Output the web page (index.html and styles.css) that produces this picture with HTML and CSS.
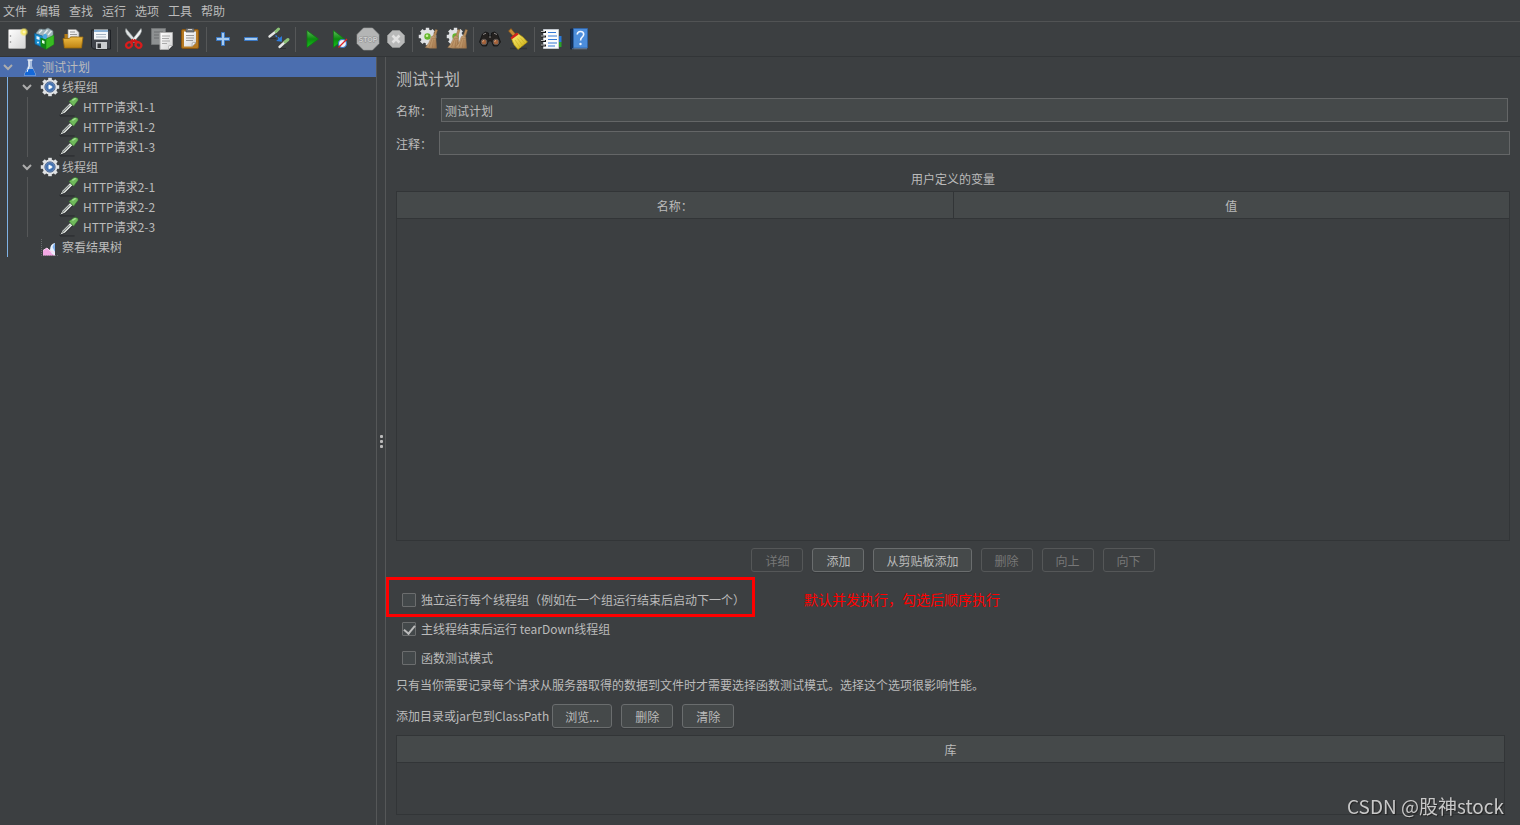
FILE: index.html
```html
<!DOCTYPE html>
<html lang="zh-CN">
<head>
<meta charset="utf-8">
<title>测试计划</title>
<link rel="stylesheet" href="styles.css">
</head>
<body>
<svg class="defs" aria-hidden="true">
  <defs>
    <linearGradient id="paper" x1="0" y1="0" x2="1" y2="1"><stop offset="0" stop-color="#fff"/><stop offset="1" stop-color="#d4d4d4"/></linearGradient>
    <linearGradient id="gold" x1="0" y1="0" x2="0" y2="1"><stop offset="0" stop-color="#eebd45"/><stop offset="1" stop-color="#bf8312"/></linearGradient>
    <linearGradient id="green" x1="0" y1="0" x2="0" y2="1"><stop offset="0" stop-color="#5fc05a"/><stop offset=".5" stop-color="#0c8a10"/><stop offset="1" stop-color="#16c51b"/></linearGradient>
    <linearGradient id="straw" x1="0" y1="0" x2="1" y2="1"><stop offset="0" stop-color="#d8b98e"/><stop offset="1" stop-color="#a67a4e"/></linearGradient>
    <linearGradient id="yellow" x1="0" y1="0" x2="1" y2="1"><stop offset="0" stop-color="#fff27a"/><stop offset="1" stop-color="#c9a90c"/></linearGradient>
    <radialGradient id="glow"><stop offset="0" stop-color="#fffde0"/><stop offset=".45" stop-color="#f6e65c"/><stop offset="1" stop-color="#f6e65c" stop-opacity="0"/></radialGradient>
    <radialGradient id="ball"><stop offset="0" stop-color="#bce3ff"/><stop offset=".6" stop-color="#3565a8"/><stop offset="1" stop-color="#7e9cc6"/></radialGradient>
  </defs>
  <symbol id="pipette" viewBox="1 1 18 18">
    <path d="M2 18h13" stroke="#2b2d2f" stroke-width="1.500" opacity=".7"/>
    <path d="M1.500 17.500 4 13l7-7 2.500 2.500-7 7z" fill="#dfe2df" stroke="#24272a" stroke-width=".8"/>
    <path d="M4 15 10.500 8.500" stroke="#7b827f" stroke-width="1"/>
    <path d="m10 5 1.500-1.200L14.500 1.500Q18.500 .8 18.200 4L15.500 7.500l-1.300 1.800z" fill="#6fb95b" stroke="#2f6d29" stroke-width=".5"/>
    <path d="m13 4 3-1.800" stroke="#a6dd94" stroke-width="1.200"/>
  </symbol>
  <symbol id="gear" viewBox="0 0 20 20">
    <g fill="#e0e2e4"><circle cx="10" cy="10" r="7.400"/><path d="M8.200.8h3.600v18.400H8.200z"/><path d="M.8 8.200h18.400v3.600H.8z"/><path d="m2.200 4.800 2.600-2.600 13 13-2.600 2.600z"/><path d="m15.200 2.200 2.600 2.600-13 13-2.600-2.600z"/></g>
  </symbol>
  <symbol id="straws" viewBox="0 0 14 20">
    <path d="m11 .5 2 .6-2.200 7-2.200-.8z" fill="#b98e5c" stroke="#8a6439" stroke-width=".4"/>
    <path d="M7 7.500q2-1.500 4.300.5l.7 11.200H5.500L.8 18.500q4-4 6.200-11z" fill="url(#straw)" stroke="#94704a" stroke-width=".5"/>
    <path d="M7.500 10 4.500 18m4.500-7.500-1 8m2.500-7.800.2 8M7 9.300h4.300" stroke="#96683e" stroke-width=".5" fill="none"/>
  </symbol>
</svg>

<header>
  <nav class="menubar" aria-label="菜单">
    <button>文件</button><button>编辑</button><button>查找</button><button>运行</button><button>选项</button><button>工具</button><button>帮助</button>
  </nav>
  <div class="toolbar" role="toolbar" aria-label="工具栏">
    <button aria-label="新建"><svg viewBox="0 0 24 24"><rect x="3.500" y="2.500" width="17" height="19" rx="1" fill="url(#paper)" stroke="#a7a7a7"/><circle cx="5.500" cy="9" r=".8" fill="#888"/><circle cx="5.500" cy="15" r=".8" fill="#888"/><circle cx="19" cy="5" r="4.500" fill="url(#glow)"/></svg></button>
    <button aria-label="模板"><svg viewBox="0 0 24 24"><path d="M3 6 6.500 2l5.500.5L15 1l5 3v7H4z" fill="#9fb4bb" stroke="#70858c" stroke-width=".6"/><path d="M6 6 9 3m2 4 3.500-4M15 8l3.500-4" stroke="#e6eef0" stroke-width="1.400"/><path d="M1.500 6.500 9.500 9v11.500L2 17z" fill="#168cd0" stroke="#0d578a" stroke-width=".7"/><path d="M9.500 9 12 6.500 14 8v6l-4.500 2z" fill="#4aaade"/><path d="m3.500 9 3 1v3l-3-1z" fill="#e8f6fd"/><circle cx="5" cy="15.500" r="1" fill="#d5effc"/><path d="m7.500 10.500 5.500 2v10l-5.500-3z" fill="#0f8314"/><path d="m13 12 8-4v9.500l-8 5z" fill="#38bb22" stroke="#137a12" stroke-width=".5"/><path d="m9 13 2.500 1v3L9 16z" fill="#e2ffe0"/></svg></button>
    <button aria-label="打开"><svg viewBox="0 0 24 24"><path d="M3.500 21V7h5l2 3h10v11z" fill="#b37a12"/><path d="M7 14V2.500h8l3 3V14z" fill="url(#paper)" stroke="#8d8d8d" stroke-width=".7"/><path d="M9 5h5M9 7.500h7M9 10h7" stroke="#999"/><path d="M2 11.500h6l2-1.500h12l-1.500 11h-17z" fill="url(#gold)" stroke="#9a690c" stroke-width=".8"/></svg></button>
    <button aria-label="保存"><svg viewBox="0 0 24 24"><path d="M2.500 3h19v19H4.500l-2-2z" fill="#40444b" stroke="#1f2226"/><rect x="5" y="2.500" width="14" height="10" fill="#f4f7fa"/><path d="M5 3h14v2H5z" fill="#8ab1d5"/><path d="M7 7.500h10M7 10h10" stroke="#a5b3c1"/><path d="M7 15h11v7H7z" fill="#c9ccd0"/><path d="M8.500 16.500h3.500V21H8.500z" fill="#33363a"/></svg></button>
    <span class="sep"></span>
    <button aria-label="剪切"><svg viewBox="0 0 24 24"><path d="M4 1.500Q2.500 4 5 7.500l7.500 8 1.500-2z" fill="#dfe3e4" stroke="#8d9495" stroke-width=".6"/><path d="M19 1.500Q20.500 4 18 7.500l-6.500 8-2-2z" fill="#f1f3f3" stroke="#8d9495" stroke-width=".6"/><path d="m11.500 13-3 2.500m3-2.500 4 2.500" stroke="#c91818" stroke-width="3"/><ellipse cx="7" cy="18" rx="3" ry="2.600" fill="none" stroke="#d91c1c" stroke-width="2.200" transform="rotate(-40 7 18)"/><ellipse cx="16.500" cy="18" rx="3" ry="2.600" fill="none" stroke="#d91c1c" stroke-width="2.200" transform="rotate(40 16.500 18)"/></svg></button>
    <button aria-label="复制"><svg viewBox="0 0 24 24"><path d="M1.500 1.500h14v16h-14z" fill="#8e9192" stroke="#717475"/><path d="M4 5h9M4 8h5M4 11h5" stroke="#6c6f70"/><path d="M10 5.500h12.500v13l-4 4H10z" fill="url(#paper)" stroke="#aaa"/><path d="M12 9h8m-8 2.500h7M12 14h8m-8 2.500h5" stroke="#aaa"/><path d="m18.500 22.500.3-3.700 3.700-.3z" fill="#fff" stroke="#999" stroke-width=".6"/></svg></button>
    <button aria-label="粘贴"><svg viewBox="0 0 24 24"><rect x="3.500" y="2.500" width="17" height="19" rx="1.500" fill="#b77a22" stroke="#885510"/><path d="M6 4.500h12v11l-4 4H6z" fill="url(#paper)"/><path d="M8 1.500h8V5H8z" fill="#777b7e" stroke="#4c4f51" stroke-width=".7"/><path d="M10 2.500h4" stroke="#ccc"/><path d="M8 8.500h8M8 11h8m-8 2.500h7" stroke="#999"/><path d="m14 19.500.3-3.700 3.700-.3z" fill="#fff" stroke="#888" stroke-width=".6"/></svg></button>
    <span class="sep"></span>
    <button aria-label="展开"><svg viewBox="0 0 24 24"><path d="M10.500 5.500h3v5h5v3h-5v5h-3v-5h-5v-3h5z" fill="#a7cbef" stroke="#3a78c4"/></svg></button>
    <button aria-label="折叠"><svg viewBox="0 0 24 24"><path d="M5.500 10.500h13v3h-13z" fill="#a7cbef" stroke="#3a78c4"/></svg></button>
    <button aria-label="切换"><svg viewBox="0 0 24 24"><path d="m2.500 9.500 7-5.500" stroke="#e4e6e4" stroke-width="2.400" stroke-linecap="round"/><path d="m9 4.500 2.500-2.500" stroke="#8cc277" stroke-width="3" stroke-linecap="round"/><path d="m12.500 20 5.500-5" stroke="#e4e6e4" stroke-width="2.400" stroke-linecap="round"/><path d="m18 15 3-2.500" stroke="#8cc277" stroke-width="3" stroke-linecap="round"/><path d="m8.500 8.500 5 4" stroke="#2f7de0" stroke-width="1.400" stroke-dasharray="2 1"/><path d="m15 9-.2 5.700-5.700-.7z" fill="#2f7de0"/><path d="M3 11.500h6M13 21.500h6" stroke="#27292b" opacity=".7"/></svg></button>
    <span class="sep"></span>
    <button aria-label="启动"><svg viewBox="0 0 24 24"><path d="M7 3.500 18.500 12 7 20.500z" fill="url(#green)" stroke="#0b7a10" stroke-width=".7"/></svg></button>
    <button aria-label="不停顿开始"><svg viewBox="0 0 24 24"><path d="M5.500 3.500 16.500 12l-11 8.500z" fill="url(#green)" stroke="#0b7a10" stroke-width=".7"/><circle cx="14.500" cy="16.500" r="4" fill="#edf3fb" stroke="#3c77c4" stroke-width="1.200"/><path d="m10.500 20.500 8.500-8.500" stroke="#e02222" stroke-width="1.300"/></svg></button>
    <button aria-label="停止" disabled><svg viewBox="0 0 24 24"><path d="M7.500 1h9L23 7.500v9L16.500 23h-9L1 16.500v-9z" fill="#b4b5b5" stroke="#9c9d9e" stroke-width=".6"/><text class="stop-word" x="12" y="15" text-anchor="middle">STOP</text></svg></button>
    <button aria-label="关闭" disabled><svg viewBox="0 0 24 24"><path d="M8.500 3.500h7l5 5v7l-5 5h-7l-5-5v-7z" fill="#b8b9b9" stroke="#9c9d9e" stroke-width=".6"/><path d="m8.500 8.500 7 7m0-7-7 7" stroke="#e2e2e2" stroke-width="2.600"/></svg></button>
    <span class="sep"></span>
    <button aria-label="清除"><svg viewBox="0 0 24 24"><use href="#gear" x="1" y="0" width="19" height="19"/><circle cx="10.500" cy="9.500" r="3.200" fill="#63b52e"/><circle cx="10" cy="8.700" r="1.300" fill="#c9f29a"/><use href="#straws" x="7.500" y="2" width="14" height="20"/></svg></button>
    <button aria-label="清除全部"><svg viewBox="0 0 24 24"><use href="#gear" x="1" y="0" width="19" height="19"/><circle cx="10.500" cy="9.500" r="3.200" fill="#63b52e"/><use href="#straws" x="2" y="2" width="14" height="20"/><use href="#straws" x="9.500" y="2" width="14" height="20"/></svg></button>
    <span class="sep"></span>
    <button aria-label="查找"><svg viewBox="0 0 24 24"><path d="m4.500 7 3-2 3 1v3h3V6l3-1 3 2 3 8-3 4h-4l-2-5h-3l-2 5h-4l-3-4z" fill="#24211f" stroke="#0f0e0e" stroke-width=".7"/><path d="m5 7.500 3-1.300m8 0 3 1.300M11 10h2" stroke="#8b8785"/><circle cx="6" cy="15" r="2.800" fill="#a5623a" stroke="#5c5856"/><circle cx="18" cy="15" r="2.800" fill="#a5623a" stroke="#5c5856"/><path d="m4.500 14.500 1.500-1m10.500 1 1.500-1" stroke="#e9b48a"/></svg></button>
    <button aria-label="重置查找"><svg viewBox="0 0 24 24"><path d="M4 21.500h17" stroke="#2b2d2f" stroke-width="1.500" opacity=".7"/><path d="m2.500 4 2.500-2.500L9.500 7 7 9z" fill="#c98a36" stroke="#80501a" stroke-width=".7"/><path d="m5.500 11.500 6.500-5q6 3.500 9.500 8.500L12 22.500Q7 18 5.500 11.500z" fill="url(#yellow)" stroke="#a48a0a" stroke-width=".7"/><path d="m9 13 5.500 8m-3-9.500L17 19m-3-8.500 5.500 6.500" stroke="#c4aa20" stroke-width=".6"/><path d="m4.500 10.500 6.500-5 1.500 2-7 5z" fill="#d3221d"/></svg></button>
    <span class="sep"></span>
    <button aria-label="函数助手"><svg viewBox="0 0 24 24"><path d="M19.500 9h3v6h-3z" fill="#2878d8"/><path d="M19.500 15h3v5h-3z" fill="#29a32a"/><path d="M4.500 2.500h15v19h-15z" fill="#fafbfc" stroke="#c3c8ce"/><path d="M9 5.500h8M9 9h9M9 12.500h9M9 16h9M9 19h7" stroke="#3379d6" stroke-width="1.200"/><path d="M2 5h5M2 9.500h5M2 14h5M2 18.500h5" stroke="#17191b" stroke-width="2"/><path d="M2 4.500h4M2 9h4M2 13.500h4M2 18h4" stroke="#ddd" stroke-width=".8"/></svg></button>
    <button aria-label="帮助"><svg viewBox="0 0 24 24"><path d="M3.500 2h3.500v20H3.500z" fill="#152f55" stroke="#0d1c33" stroke-width=".6"/><path d="M6.500 1.500h14v19.500h-14z" fill="#4c8ddb" stroke="#2d65a9" stroke-width=".8"/><path d="M5 21.800h15" stroke="#8ea6c4" stroke-width=".6"/><path d="M10.200 7.500q.3-3 3.300-3 3.200 0 3.200 2.800 0 1.800-1.800 3-1.300 1-1.300 3.200" fill="none" stroke="#f0f6ff" stroke-width="1.600"/><circle cx="13.500" cy="17" r="1.200" fill="#f0f6ff"/></svg></button>
  </div>
</header>

<main>
  <aside class="tree">
    <ul>
      <li>
        <div class="node selected"><svg class="chev" viewBox="0 0 10 10"><path d="m1 3 4 4 4-4"/></svg><svg class="ico root" viewBox="0 0 14 20"><path d="M5 3h4v6l4 8.500q0 1.500-1.500 1.500h-9Q1 19 1 17.500L5 9z" fill="#c9d8ee" opacity=".7"/><path d="M4 12h6l2.500 5.500q0 1-1 1h-9q-1 0-1-1z" fill="#1468d8"/><path d="M4.500 3h5" stroke="#fff" stroke-width="1.200"/><path d="m6 4 .2 5-2.200 6" stroke="#fff" fill="none"/></svg>测试计划</div>
        <ul class="level1">
          <li>
            <div class="node"><svg class="chev" viewBox="0 0 10 10"><path d="m1 3 4 4 4-4"/></svg><svg class="ico" viewBox="0 0 20 20"><use href="#gear"/><circle cx="10" cy="10" r="5.200" fill="url(#ball)" stroke="#47618c" stroke-width=".8"/><path d="m8.700 7.500 4 2.500-4 2.500z" fill="#fff"/></svg>线程组</div>
            <ul class="level2">
              <li class="node"><svg class="ico" viewBox="0 0 20 20"><use href="#pipette"/></svg>HTTP请求1-1</li>
              <li class="node"><svg class="ico" viewBox="0 0 20 20"><use href="#pipette"/></svg>HTTP请求1-2</li>
              <li class="node"><svg class="ico" viewBox="0 0 20 20"><use href="#pipette"/></svg>HTTP请求1-3</li>
            </ul>
          </li>
          <li>
            <div class="node"><svg class="chev" viewBox="0 0 10 10"><path d="m1 3 4 4 4-4"/></svg><svg class="ico" viewBox="0 0 20 20"><use href="#gear"/><circle cx="10" cy="10" r="5.200" fill="url(#ball)" stroke="#47618c" stroke-width=".8"/><path d="m8.700 7.500 4 2.500-4 2.500z" fill="#fff"/></svg>线程组</div>
            <ul class="level2">
              <li class="node"><svg class="ico" viewBox="0 0 20 20"><use href="#pipette"/></svg>HTTP请求2-1</li>
              <li class="node"><svg class="ico" viewBox="0 0 20 20"><use href="#pipette"/></svg>HTTP请求2-2</li>
              <li class="node"><svg class="ico" viewBox="0 0 20 20"><use href="#pipette"/></svg>HTTP请求2-3</li>
            </ul>
          </li>
          <li class="node leaf"><svg class="ico" viewBox="0 0 20 20"><path d="M1.500 2v16.500H18" fill="none" stroke="#66696b" stroke-dasharray="1 1"/><path d="M3 18.500v-5l4-2.500 3 2 5 1.500v4z" fill="#f3a8e4"/><path d="M10 13q0-6 5-7v12.500Q11 17 10 13z" fill="#e9f2fd"/><path d="M12.500 10q1-3 2.500-4v9z" fill="#7fb0ee"/><path d="M3 13.500 7 11l3 3 5 1.500" stroke="#fbd7f4" fill="none"/></svg>察看结果树</li>
        </ul>
      </li>
    </ul>
  </aside>
  <div class="splitter" role="separator"><i></i><i></i><i></i></div>

  <section class="panel">
    <h1>测试计划</h1>
    <div class="field name"><label for="name">名称：</label><input id="name" type="text" value="测试计划"></div>
    <div class="field"><label for="comment">注释：</label><input id="comment" type="text"></div>

    <h2>用户定义的变量</h2>
    <div class="grid vars">
      <table><thead><tr><th>名称：</th><th>值</th></tr></thead></table>
    </div>
    <div class="actions">
      <button class="btn" disabled>详细</button>
      <button class="btn">添加</button>
      <button class="btn">从剪贴板添加</button>
      <button class="btn" disabled>删除</button>
      <button class="btn" disabled>向上</button>
      <button class="btn" disabled>向下</button>
    </div>

    <div class="marked">
      <label class="check outlined"><input type="checkbox">独立运行每个线程组（例如在一个组运行结束后启动下一个）</label>
      <span class="remark">默认并发执行，勾选后顺序执行</span>
    </div>
    <div class="options">
      <label class="check"><input type="checkbox" checked>主线程结束后运行 tearDown线程组</label>
      <label class="check"><input type="checkbox">函数测试模式</label>
    </div>
    <p>只有当你需要记录每个请求从服务器取得的数据到文件时才需要选择函数测试模式。选择这个选项很影响性能。</p>

    <div class="classpath">
      <span>添加目录或jar包到ClassPath</span>
      <div class="buttons">
        <button class="btn">浏览...</button>
        <button class="btn">删除</button>
        <button class="btn">清除</button>
      </div>
    </div>
    <div class="grid libs">
      <table><thead><tr><th>库</th></tr></thead></table>
    </div>
  </section>
</main>
<div class="watermark">CSDN @股神stock</div>
</body>
</html>
```

FILE: styles.css
```css
:root {
  --bg: #3c3f41;
  --raised: #45494a;
  --line: #555758;
  --dark: #323537;
  --text: #bbbbbb;
}

* { box-sizing: border-box; }

body {
  margin: 0;
  min-height: 100vh;
  display: flex;
  flex-direction: column;
  background: var(--bg);
  color: var(--text);
  font: 12px/18px "Noto Sans CJK SC", sans-serif;
}

button, input { font: inherit; color: inherit; }
ul { list-style: none; margin: 0; padding: 0; }
.defs { position: absolute; width: 0; height: 0; }

/* Menu and toolbar */
.menubar {
  display: flex;
  gap: 9px;
  height: 22px;
  padding: 1px 3px 0;
  border-bottom: 1px solid #515354;
}
.menubar button, .toolbar button {
  padding: 0;
  border: 0;
  background: none;
}
.toolbar {
  display: flex;
  align-items: center;
  height: 35px;
  padding: 0 3px;
  border-bottom: 1px solid var(--dark);
}
.toolbar button {
  display: flex;
  justify-content: center;
  width: 28px;
}
.toolbar svg { width: 24px; height: 24px; }
.sep {
  width: 1px;
  height: 25px;
  margin: 0 2px;
  background: var(--line);
}
.stop-word {
  font: bold 7px "Liberation Sans", sans-serif;
  fill: #cfd0d0;
  stroke: #8f9090;
  stroke-width: 1px;
  paint-order: stroke;
}

main { flex: 1; display: flex; }

/* Tree */
.tree { width: 376px; flex: none; }
.node {
  display: flex;
  align-items: center;
  height: 20px;
  padding-left: 3px;
}
.selected { background: #4b6eaf; }
.chev {
  width: 10px;
  height: 10px;
  margin-right: 8px;
  fill: none;
  stroke: #adadad;
  stroke-width: 2;
}
.ico { width: 20px; height: 20px; margin-right: 2px; }
.root { width: 14px; margin: 0 5px 0 2px; }
.level1 { margin-left: 7px; border-left: 1px solid #7fb2e5; }
.level1 > li > .node { padding-left: 14px; }
.level2 { margin-left: 19px; border-left: 1px solid var(--line); }
.level2 .node { padding-left: 31px; }
.level2 .ico { margin-right: 4px; }
.level1 > .leaf { padding-left: 32px; }

.splitter {
  flex: none;
  width: 10px;
  display: flex;
  flex-direction: column;
  align-items: center;
  justify-content: center;
  gap: 2px;
  border: solid var(--line);
  border-width: 0 1px;
}
.splitter i { width: 3px; height: 3px; border-radius: 1px; background: var(--text); }

/* Test plan form */
.panel {
  flex: 1;
  min-width: 0;
  display: flex;
  flex-direction: column;
  padding: 10px;
}
h1 { margin: 0 0 9px; font-size: 16px; line-height: 22px; font-weight: 400; }
h2 { margin: 15px 0 3px; font-size: 12px; font-weight: 400; text-align: center; }
p { margin: 6px 0 10px; }

.field { display: flex; align-items: center; }
.field label { width: 43px; padding-top: 1px; }
.field input {
  flex: 1;
  height: 24px;
  padding: 1px 3px 0;
  border: 1px solid #646667;
  background: var(--raised);
  outline: 0;
}
.name { margin-bottom: 9px; padding-right: 2px; }
.name label { width: 45px; }

.grid { border: 1px solid var(--dark); }
.grid table { width: 100%; border-collapse: collapse; table-layout: fixed; }
.grid th {
  height: 26px;
  padding: 2px 0 0;
  font-weight: 400;
  background: var(--raised);
  border-bottom: 1px solid var(--dark);
}
.grid th + th { border-left: 1px solid var(--dark); }
.vars { flex: 1; min-height: 120px; }
.libs { height: 80px; margin: 7px 5px 0 0; }

.actions, .buttons { display: flex; gap: 9px; }
.actions { justify-content: center; margin: 7px 0 5px; }
.btn {
  height: 24px;
  padding: 1px 12px 0;
  border: 1px solid #6a6d6e;
  border-radius: 3px;
  background: var(--raised);
  box-shadow: 0 1px 0 #35383a;
  min-width: 52px;
}
.btn:disabled {
  color: #777777;
  border-color: var(--line);
  background: none;
  box-shadow: none;
}

.marked { display: flex; align-items: center; gap: 49px; margin-left: -10px; }
.remark { padding-top: 4px; color: #ff0000; font-size: 14px; }
.check { display: flex; align-items: center; gap: 5px; height: 24px; }
.outlined {
  height: 40px;
  padding: 6px 7px 0 13px;
  border: 3px solid #ff0000;
}
.check input {
  appearance: none;
  width: 14px;
  height: 14px;
  margin: 0;
  border: 1px solid #6b6d6e;
  border-radius: 1px;
  background: #43484a;
}
.check input:checked::before {
  content: "";
  display: block;
  width: 5px;
  height: 9px;
  margin: 0 auto;
  border: solid var(--text);
  border-width: 0 2px 2px 0;
  transform: rotate(40deg);
}
.options { display: flex; flex-direction: column; gap: 5px; padding-left: 6px; }
.classpath { display: flex; align-items: center; gap: 3px; }

.watermark {
  position: fixed;
  right: 16px;
  bottom: 6px;
  font-size: 19px;
  line-height: 26px;
  color: #c8c8c8;
  text-shadow: 1px 1px 1px #222;
}
```
